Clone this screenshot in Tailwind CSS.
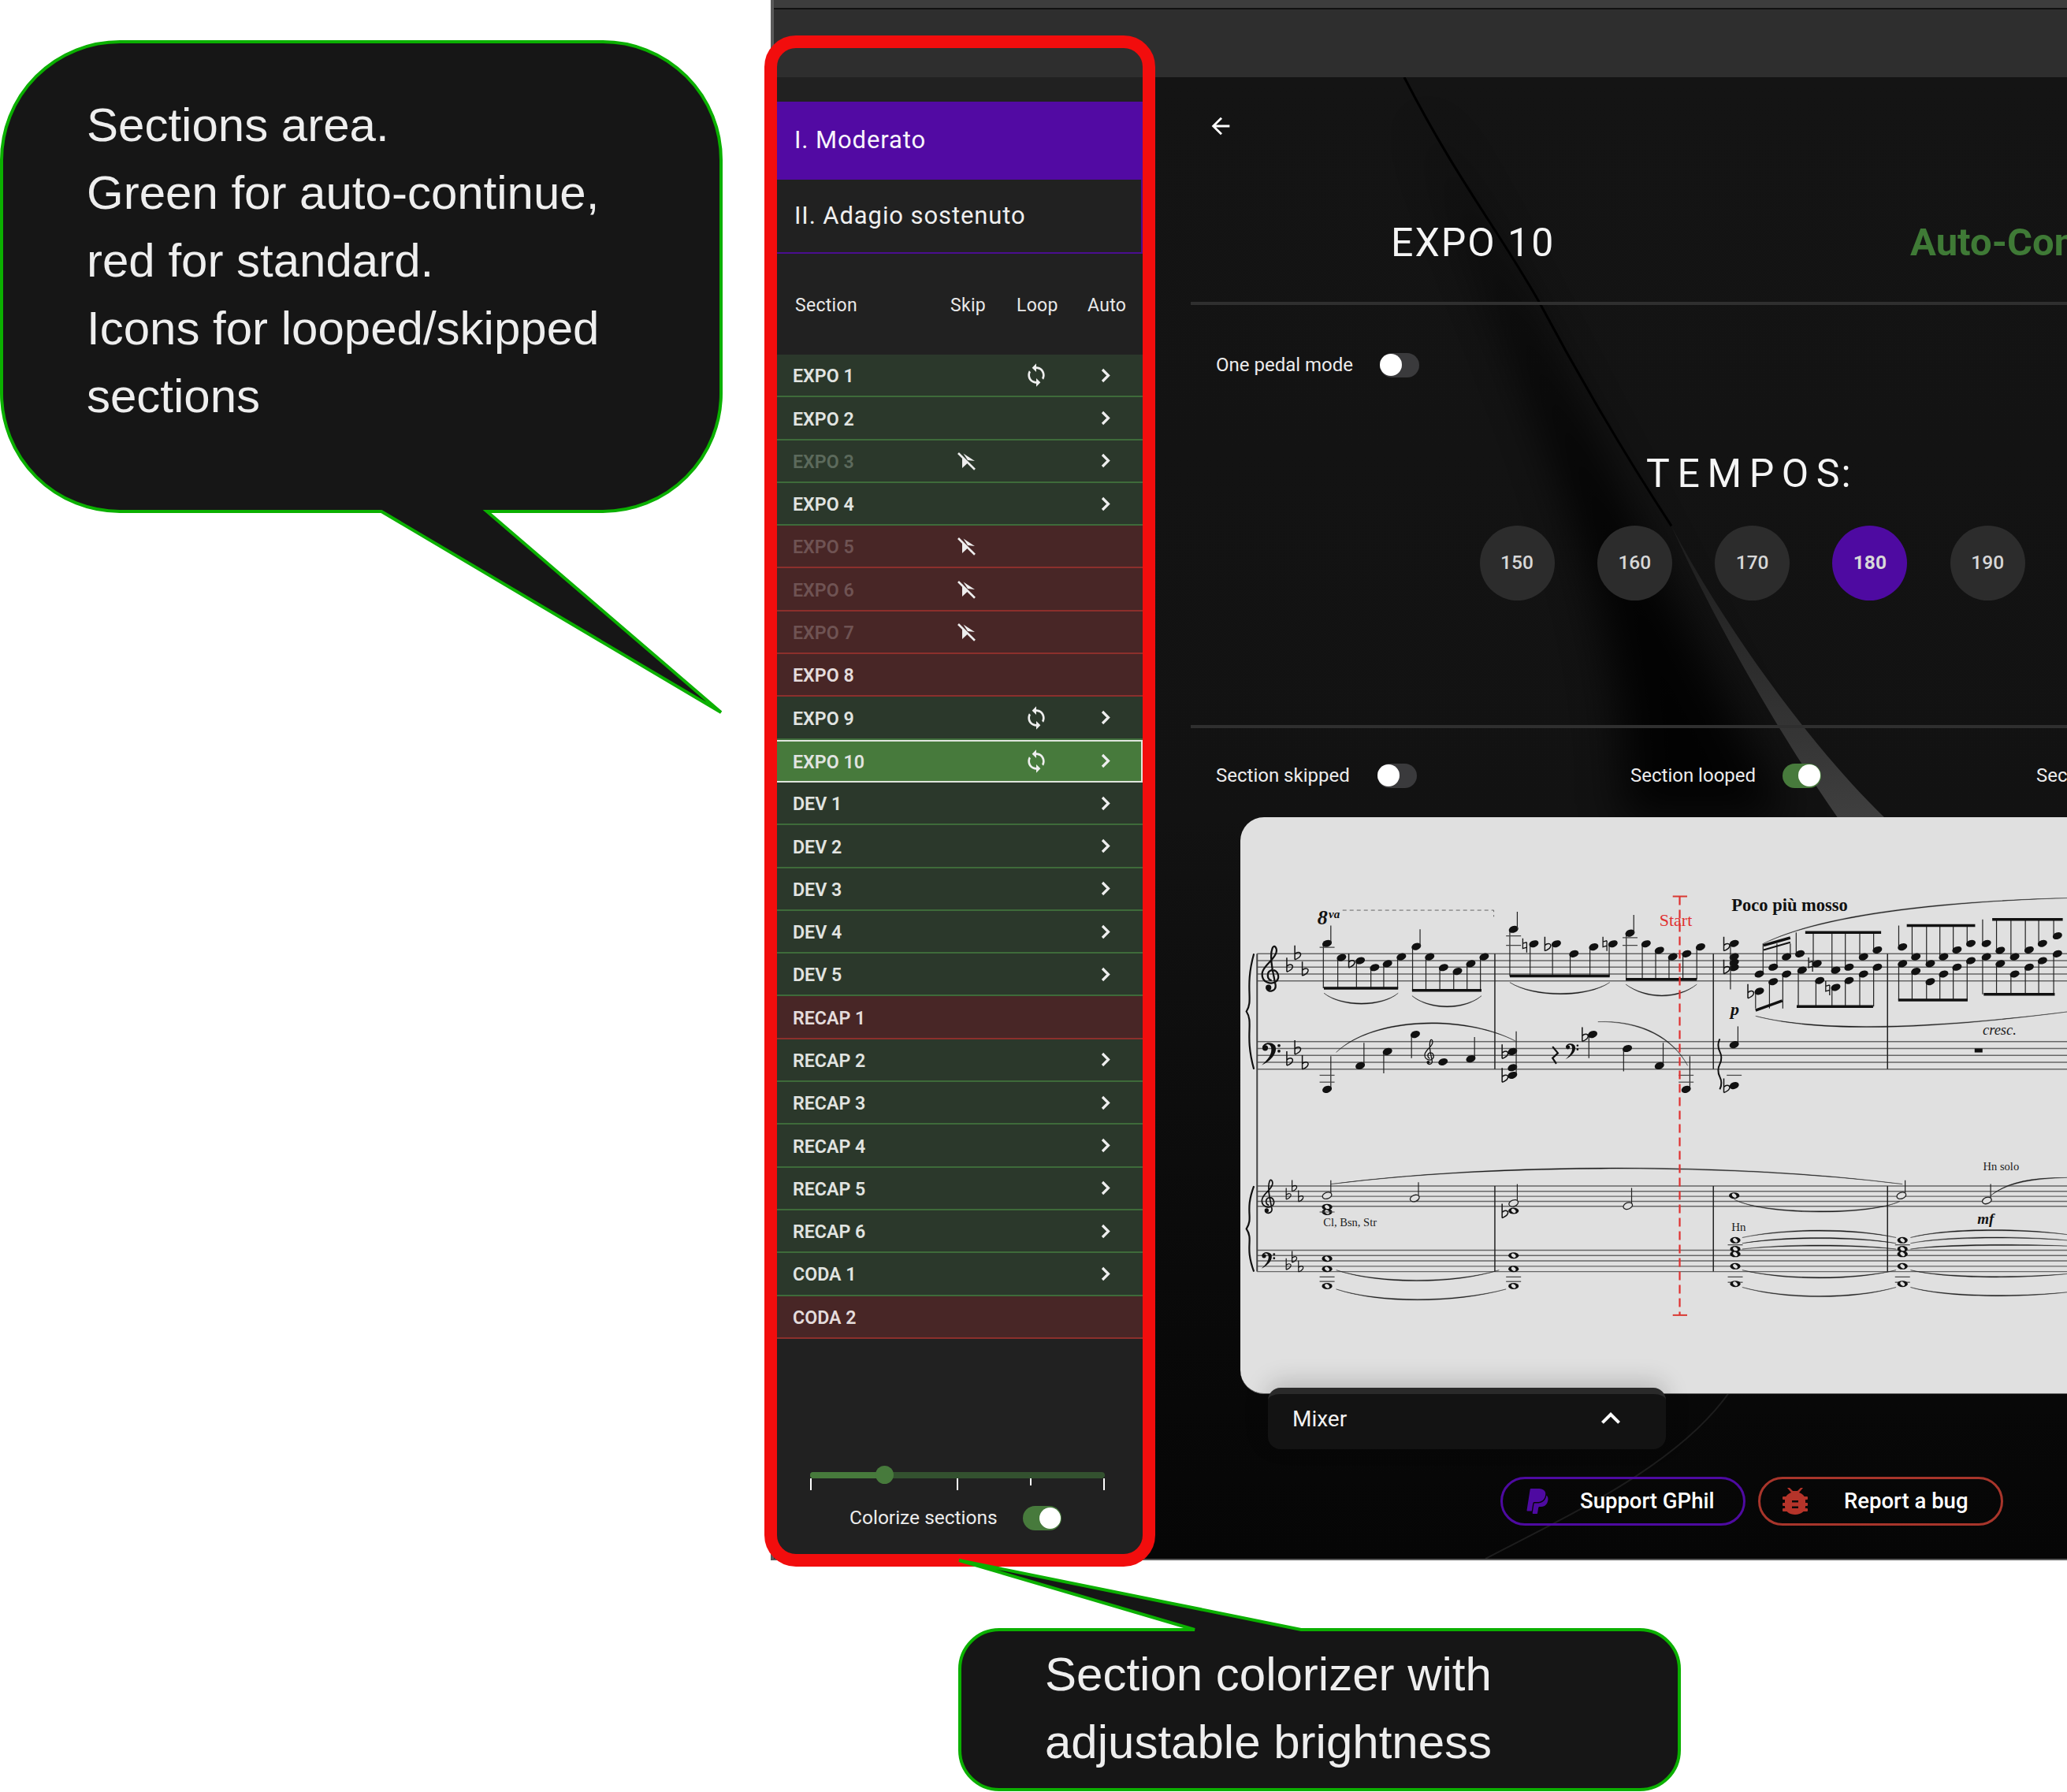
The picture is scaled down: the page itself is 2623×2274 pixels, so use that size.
<!DOCTYPE html>
<html lang="en">
<head>
    <meta charset="UTF-8">
    <title>GPhil sections area</title>
    <script src="https://cdn.jsdelivr.net/npm/@tailwindcss/browser@4"></script>
</head>
<body class="bg-white">
<div class="relative w-[2623px] h-[2274px] overflow-hidden font-[Roboto,sans-serif] bg-white">

    <!-- app window -->
    <div class="ml-[978px] w-[1645px] h-[1980px] flex flex-col border-l-[4px] border-b-[2px] border-[#5a5a5a] overflow-hidden">
        <div class="h-[98px] shrink-0 bg-[#2e2e2e]">
            <div class="h-[12px] bg-[#3d3d3d] border-b-[2px] border-[#111]"></div>
        </div>

        <div class="flex flex-1 min-h-0">
            <!-- sidebar -->
            <aside class="w-[468px] shrink-0 bg-[#212121] pt-[31px] text-white">
                <div class="h-[99px] bg-[#520aa3] flex items-center pl-[26px] text-[31px] tracking-[0.9px] text-[#f8f5fc]">I. Moderato</div>
                <div class="h-[94px] border-b-2 border-r-2 border-[#4a0e8f] flex items-center pl-[26px] text-[31px] tracking-[0.9px] text-[#efefef]">II. Adagio sostenuto</div>
                <div class="h-[128px] flex items-center pt-[4px] pl-[27px] text-[23px] tracking-[0.3px] text-[#e8e8e8]">
                    <span class="w-[197px]">Section</span>
                    <span class="w-[84px]">Skip</span>
                    <span class="w-[90px]">Loop</span>
                    <span>Auto</span>
                </div>
                <div id="rows"></div>

                <div class="relative ml-[46px] mt-[169px] w-[374px] h-[8px] rounded-full bg-[#33512f]">
                    <div class="w-[94px] h-full rounded-l-full bg-[#477a3c]"></div>
                    <div class="absolute left-[83px] top-[-8px] w-[23px] h-[23px] rounded-full bg-[#477a3c]"></div>
                    <div class="absolute left-[0px] top-[8px] w-[2px] h-[15px] bg-white"></div>
                    <div class="absolute left-[186px] top-[8px] w-[2px] h-[15px] bg-white"></div>
                    <div class="absolute left-[279px] top-[8px] w-[2px] h-[9px] bg-white"></div>
                    <div class="absolute left-[372px] top-[8px] w-[2px] h-[15px] bg-white"></div>
                </div>
                <div class="flex items-center ml-[96px] mt-[35px] h-[31px] text-[24.5px] text-[#ececec]">
                    <span class="w-[220px] whitespace-nowrap">Colorize sections</span>
                    <span class="relative block w-[49px] h-[31px] rounded-full bg-[#477a3c]">
                        <span class="absolute right-[1px] top-[2px] w-[27px] h-[27px] rounded-full bg-white"></span>
                    </span>
                </div>
            </aside>

            <!-- main pane -->
            <main class="relative flex-1 min-w-0 overflow-hidden bg-gradient-to-b from-[#141414] via-[#121212] to-[#060606] pl-[61px] text-white">
                <svg class="absolute inset-0 w-full h-full" viewBox="1450 98 1173 1882" preserveAspectRatio="none">
                    <defs>
                        <filter id="soft" x="-40%" y="-20%" width="180%" height="140%"><feGaussianBlur stdDeviation="28"/></filter>
                        <linearGradient id="wedge" x1="0" y1="0" x2="0" y2="1">
                            <stop offset="0" stop-color="#1c1c1c"/>
                            <stop offset="1" stop-color="#3f3f3f"/>
                        </linearGradient>
                    </defs>
                    <path d="M1800 140 C1890 310 2020 560 2270 1040 L2060 1040 C2070 800 1960 520 1800 140 Z" fill="#000" opacity="0.85" filter="url(#soft)"/>
                    <path d="M2121 668 C2180 800 2270 950 2333 1040 L2393 1040 C2300 950 2190 800 2121 668 Z" fill="url(#wedge)"/>
                    <path d="M1782 98 C1850 230 1900 290 1954 385 C2010 490 2070 590 2121 668" fill="none" stroke="#000" stroke-width="3"/>
                    <path d="M2194 1769 C2130 1860 2000 1920 1885 1980" fill="none" stroke="#1d1d1d" stroke-width="2"/>
                </svg>

                <div class="relative">
                    <div class="h-[129px] pt-[45px] pl-[21px]">
                        <svg class="w-[34px] h-[34px]" viewBox="0 0 24 24" fill="#fff"><path d="M20 11H7.83l5.59-5.59L12 4l-8 8 8 8 1.41-1.41L7.83 13H20v-2z"/></svg>
                    </div>
                    <div class="h-[156px] pt-[6px] flex items-center text-[50px] whitespace-nowrap">
                        <span class="ml-[254px] w-[659px] shrink-0 tracking-[2px] text-[#f5f5f5]">EXPO 10</span>
                        <span class="font-bold text-[#3f7a36] text-[49px]">Auto-Continue</span>
                    </div>
                    <div class="h-[4px] bg-[#2f2f2f]"></div>

                    <div class="h-[152px] flex items-center pl-[32px] text-[24px]">
                        <span class="w-[208px] whitespace-nowrap text-[#ececec]">One pedal mode</span>
                        <span class="relative block w-[50px] h-[31px] rounded-full bg-[#3a3a3c]">
                            <span class="absolute left-0 top-[1px] w-[28px] h-[28px] rounded-full bg-white"></span>
                        </span>
                    </div>

                    <div class="h-[122px] pt-[2px] flex items-center pl-[578px] text-[50px] text-[#f5f5f5] whitespace-nowrap tracking-[9.6px]">
                        <div>TEMPO<span class="tracking-[2px]">S:</span></div>
                    </div>

                    <div class="mt-[6px] ml-[366.5px] flex gap-[54.3px] text-[24.5px] font-medium text-[#d8d8d8]">
                        <div class="w-[95px] h-[95px] shrink-0 rounded-full bg-[#2c2c2c] flex items-center justify-center">150</div>
                        <div class="w-[95px] h-[95px] shrink-0 rounded-full bg-[#2c2c2c] flex items-center justify-center">160</div>
                        <div class="w-[95px] h-[95px] shrink-0 rounded-full bg-[#2c2c2c] flex items-center justify-center">170</div>
                        <div class="w-[95px] h-[95px] shrink-0 rounded-full bg-[#4e0aa1] flex items-center justify-center font-bold">180</div>
                        <div class="w-[95px] h-[95px] shrink-0 rounded-full bg-[#2c2c2c] flex items-center justify-center">190</div>
                    </div>

                    <div class="mt-[158px] h-[4px] bg-[#2f2f2f]"></div>

                    <div class="h-[113px] pt-[44px] pl-[32px] flex items-start text-[24px] leading-[32px] whitespace-nowrap text-[#ececec]">
                        <div class="w-[526px] shrink-0 flex items-center">
                            <span class="w-[205px]">Section skipped</span>
                            <span class="relative block w-[50px] h-[31px] rounded-full bg-[#3a3a3c]">
                                <span class="absolute left-0 top-[1px] w-[28px] h-[28px] rounded-full bg-white"></span>
                            </span>
                        </div>
                        <div class="w-[515px] shrink-0 flex items-center">
                            <span class="w-[193px]">Section looped</span>
                            <span class="relative block w-[49px] h-[31px] rounded-full bg-[#477a3c]">
                                <span class="absolute right-[1px] top-[1px] w-[28px] h-[28px] rounded-full bg-white"></span>
                            </span>
                        </div>
                        <div>Section auto-continue</div>
                    </div>

                    <!-- score -->
                    <div class="relative ml-[63px] w-[1049px] h-[732px] rounded-l-[30px] bg-[#e0e0e0] border-b-[1px] border-[#666] overflow-hidden">
                        <svg id="score" class="absolute inset-0" width="1049" height="732" viewBox="0 0 1049 732"></svg>
                    </div>

                    <!-- mixer bar -->
                    <div class="relative ml-[98px] mt-[-8px] w-[505px] h-[78px] rounded-[16px] bg-[#131313] border-t-[8px] border-[#2a2a2a] flex items-center justify-between pl-[31px] pr-[46px] text-[28px] shadow-[0_-8px_30px_rgba(0,0,0,0.18)]">
                        <span class="pb-[7px] text-[#f2f2f2]">Mixer</span>
                        <svg class="w-[48px] h-[48px] mb-[8px]" viewBox="0 0 24 24" fill="#fff"><path d="M12 8l-6 6 1.41 1.41L12 10.83l4.59 4.58L18 14z"/></svg>
                    </div>

                    <!-- buttons -->
                    <div class="mt-[35px] ml-[393px] flex gap-[16px] text-[27.5px] font-medium text-white whitespace-nowrap">
                        <div class="w-[311px] h-[62px] rounded-full border-[3px] border-[#4e0aa1] flex items-center pl-[29px]">
                            <svg class="w-[30px] h-[36px]" viewBox="0 0 384 512" fill="#4e0aa1"><path d="M111.4 295.9c-3.5 19.2-17.4 108.7-21.5 134-.3 1.8-1 2.5-3 2.5H12.3c-7.6 0-13.1-6.6-12.1-13.9L58.8 46.6c1.5-9.6 10.1-16.9 20-16.9 152.3 0 165.1-3.7 204 11.4 60.1 23.3 65.6 79.5 44 140.3-21.5 62.6-72.5 89.5-140.1 90.3-43.4.7-69.5-7-75.3 24.2zM357.1 152c-1.8-1.3-2.5-1.8-3 1.3-2 11.4-5.1 22.5-8.8 33.6-39.9 113.8-150.5 103.9-204.5 103.9-6.1 0-10.1 3.3-10.9 9.4-22.6 140.4-27.1 169.7-27.1 169.7-1 7.1 3.5 12.9 10.6 12.9h63.5c8.6 0 15.7-6.3 17.4-14.9.7-5.4-1.1 6.1 14.4-91.3 4.6-22 14.3-19.7 29.3-19.7 71 0 126.4-28.8 142.9-112.3 6.5-34.8 4.6-71.4-23.8-92.6z"/></svg>
                            <span class="ml-[39px]">Support GPhil</span>
                        </div>
                        <div class="w-[311px] h-[62px] rounded-full border-[3px] border-[#a8352b] flex items-center pl-[28px]">
                            <svg class="w-[32px] h-[35px]" viewBox="0 0 32 35" fill="#b5342a">
                                <path d="M6 1l2-1 5 5h6l5-5 2 1-5 6c5 2 8 5 8 10v8c0 6-6 10-13 10S3 31 3 25v-8c0-5 3-8 8-10z" transform="translate(0 -1)"/>
                                <rect x="0" y="11" width="32" height="4" rx="1"/><rect x="0" y="19" width="32" height="4" rx="1"/><rect x="0" y="26" width="32" height="4" rx="1"/>
                                <rect x="12" y="16" width="8" height="2.5" fill="#0a0a0a"/><rect x="12" y="23.5" width="8" height="2.5" fill="#0a0a0a"/>
                            </svg>
                            <span class="ml-[46px]">Report a bug</span>
                        </div>
                    </div>
                </div>
            </main>
        </div>
    </div>

    <!-- red highlight round the sections area -->
    <div class="absolute left-[970px] top-[45px] w-[496px] h-[1943px] rounded-[40px] border-[16px] border-[#f20d0d] pointer-events-none"></div>

    <!-- callouts -->
    <svg class="absolute inset-0 pointer-events-none" width="2623" height="2274" viewBox="0 0 2623 2274">
        <path d="M152 53H765A150 150 0 0 1 915 203V499A150 150 0 0 1 765 649H618L915 904L484 649H152A150 150 0 0 1 2 499V203A150 150 0 0 1 152 53Z" fill="#161616" stroke="#0bb000" stroke-width="4"/>
        <path d="M1268 2068H1516L1217 1980L1651 2068H2081A50 50 0 0 1 2131 2118V2221A50 50 0 0 1 2081 2271H1268A50 50 0 0 1 1218 2221V2118A50 50 0 0 1 1268 2068Z" fill="#161616" stroke="#0bb000" stroke-width="4"/>
    </svg>
    <div class="absolute left-[110px] top-[116px] font-['Liberation_Sans',sans-serif] text-[60px] leading-[86px] text-[#eeeeee] whitespace-nowrap">
        Sections area.<br>Green for auto-continue,<br>red for standard.<br>Icons for looped/skipped<br>sections
    </div>
    <div class="absolute left-[1326px] top-[2082px] font-['Liberation_Sans',sans-serif] text-[60px] leading-[86px] text-[#eeeeee] whitespace-nowrap">
        Section colorizer with<br>adjustable brightness
    </div>
</div>

<script>
    // Section rows
    const sections = [
        ['EXPO 1','g','loop'],['EXPO 2','g'],['EXPO 3','g','skip'],['EXPO 4','g'],
        ['EXPO 5','r','skip'],['EXPO 6','r','skip'],['EXPO 7','r','skip'],['EXPO 8','r'],
        ['EXPO 9','g','loop'],['EXPO 10','s','loop'],
        ['DEV 1','g'],['DEV 2','g'],['DEV 3','g'],['DEV 4','g'],['DEV 5','g'],
        ['RECAP 1','r'],['RECAP 2','g'],['RECAP 3','g'],['RECAP 4','g'],['RECAP 5','g'],['RECAP 6','g'],
        ['CODA 1','g'],['CODA 2','r']
    ];
    const rowClass = {
        g: 'bg-[#2b382b] border-[#3e6b3a]',
        r: 'bg-[#482626] border-[#8c2f2c]',
        s: 'bg-[#477a3c] border-[#dfe6dd] border-t-[2px] border-r-[2px]'
    };
    const syncIcon = '<svg class="w-[32px] h-[32px]" viewBox="0 0 24 24" fill="#eee"><path d="M12 4V1L8 5l4 4V6c3.31 0 6 2.69 6 6 0 1.01-.25 1.97-.7 2.8l1.46 1.46C19.54 15.03 20 13.57 20 12c0-4.42-3.58-8-8-8zm0 14c-3.31 0-6-2.69-6-6 0-1.01.25-1.97.7-2.8L5.24 7.74C4.46 8.97 4 10.43 4 12c0 4.42 3.58 8 8 8v3l4-4-4-4v3z"/></svg>';
    const skipIcon = '<svg class="w-[24px] h-[24px]" viewBox="0 0 24 24" fill="#eee"><path d="M7 5.5V21l7-6.5z"/><path d="M8.5 2.5L23 12l-9-1z"/><path d="M2 2l21 20.7" stroke="#eee" stroke-width="2.6" fill="none"/></svg>';
    const chevron = '<svg class="w-[12px] h-[19px]" viewBox="0 0 12 19" fill="none" stroke="#eee" stroke-width="3.2"><path d="M2 2l7.5 7.5L2 17"/></svg>';

    document.getElementById('rows').innerHTML = sections.map(([name, kind, icon]) => {
        const skipped = icon === 'skip';
        const text = skipped ? (kind === 'r' ? 'text-[#6f5353]' : 'text-[#5c6a5c]') : (kind === 'r' ? 'text-[#e4dcdc]' : 'text-[#e1e4e1]');
        return `<div class="grid grid-cols-[206px_76px_102px_74px] items-center h-[54.3px] border-b-[2px] ${rowClass[kind]}">
            <span class="pl-[24px] pt-[3px] text-[23.2px] font-semibold ${text}">${name}</span>
            <span class="flex justify-center">${skipped ? skipIcon : ''}</span>
            <span class="flex justify-center">${icon === 'loop' ? syncIcon : ''}</span>
            <span class="flex justify-center">${kind !== 'r' ? chevron : ''}</span>
        </div>`;
    }).join('');

    // Score: points are read off the crop of the reference, X() and Y() bring them to the sheet
    const X = x => x / 1.475 - 14;
    const Y = y => y / 2.063 - 7;
    let s = '';
    const line = (x1, y1, x2, y2, w = 1, c = '#333') => { s += `<line x1="${X(x1)}" y1="${Y(y1)}" x2="${X(x2)}" y2="${Y(y2)}" stroke="${c}" stroke-width="${w}"/>`; };
    const staff = (ys) => ys.forEach(y => line(52, y, 1568, y, 1.4, '#666'));
    const head = (x, y) => {
        s += `<ellipse cx="${X(x)}" cy="${Y(y)}" rx="6.2" ry="4.3" transform="rotate(-20 ${X(x)} ${Y(y)})" fill="#111"/>`;
    };
    const halfHead = (x, y) => {
        s += `<ellipse cx="${X(x)}" cy="${Y(y)}" rx="6" ry="4" transform="rotate(-20 ${X(x)} ${Y(y)})" fill="#e0e0e0" stroke="#222" stroke-width="1.3"/>`;
    };
    const wholeHead = (x, y) => {
        s += `<ellipse cx="${X(x)}" cy="${Y(y)}" rx="6.6" ry="4" fill="#111"/><ellipse cx="${X(x)}" cy="${Y(y)}" rx="2.2" ry="3.2" transform="rotate(-50 ${X(x)} ${Y(y)})" fill="#e0e0e0"/>`;
    };
    const stem = (x, y1, y2) => line(x, y1, x, y2, 1.2, '#222');
    const beam = (x1, y1, x2, y2, w = 3.5) => line(x1, y1, x2, y2, w, '#111');
    const ledger = (x, y) => line(x - 14, y, x + 14, y, 1.2, '#444');
    const slur = (x1, y1, a, b, c, d, x2, y2) => {
        s += `<path d="M${X(x1)} ${Y(y1)}C${X(a)} ${Y(b)} ${X(c)} ${Y(d)} ${X(x2)} ${Y(y2)}C${X(c)} ${Y(d) + 1.6} ${X(a)} ${Y(b) + 1.6} ${X(x1)} ${Y(y1)}Z" fill="#1c1c1c" stroke="#1c1c1c" stroke-width="0.4"/>`;
    };
    const flat = (x, y, k = 1) => { s += `<path transform="translate(${X(x)} ${Y(y)}) scale(${k})" d="M-3 -12V6M-3 -1C1 -5 6 -3 4 1C3 3 0 5 -3 6" fill="none" stroke="#111" stroke-width="1.5"/>`; };
    const natural = (x, y) => { s += `<path transform="translate(${X(x)} ${Y(y)})" d="M-2.5 -9V4L2.5 2.5M-2.5 -2.5L2.5 -4M2.5 -4V9" fill="none" stroke="#111" stroke-width="1.3"/>`; };
    const treble = (x, y, k = 1) => { s += `<g transform="translate(${X(x)} ${Y(y)}) scale(${k})"><path d="M13 44C7 43 6 33 13 31C21 30 24 40 19 45C13 50 0 47 1 35C2 25 17 18 19 8C20 2 16 -2 14 3C12 8 12 18 14 30L18 50C19 58 8 60 7 54" fill="none" stroke="#111" stroke-width="2.3"/><circle cx="9" cy="53" r="3.6" fill="#111"/></g>`; };
    const bass = (x, y, k = 1) => { s += `<g transform="translate(${X(x)} ${Y(y)}) scale(${k})"><path d="M2 8C2 1 13 -1 18 5C22 13 14 24 1 30C9 23 15 15 13 7C11 2 6 3 5 6Z" fill="#111"/><circle cx="5.5" cy="8" r="3.6" fill="#111"/><circle cx="23" cy="5" r="1.9" fill="#111"/><circle cx="23" cy="12" r="1.9" fill="#111"/></g>`; };
    const text = (x, y, str, size, font, extra = '') => { s += `<text x="${X(x)}" y="${Y(y)}" font-family="${font}" font-size="${size}" ${extra}>${str}</text>`; };
    // notes hanging from or standing under one beam
    const group = (notes, beamY, x1, x2) => {
        notes.forEach(([x, y]) => { stem(x - 7, y, beamY); head(x, y); });
        beam(x1, beamY, x2, beamY);
    };

    staff([372, 390, 407, 425, 443]);
    staff([602, 620, 638, 656, 674]);
    staff([980, 994, 1007, 1020, 1033]);
    staff([1148, 1162, 1176, 1190, 1204]);

    // system lines and braces
    line(52, 372, 52, 1204, 2, '#444');
    [497, 906, 1232].forEach(x => { line(x, 372, x, 674, 1.5, '#222'); line(x, 980, x, 1204, 1.5, '#222'); });
    const brace = (y1, y2) => {
        const m = (y1 + y2) / 2;
        s += `<path d="M${X(46)} ${Y(y1)}C${X(28)} ${Y(y1 + (m - y1) * .6)} ${X(46)} ${Y(m - 30)} ${X(32)} ${Y(m)}C${X(46)} ${Y(m + 30)} ${X(28)} ${Y(y2 - (y2 - m) * .6)} ${X(46)} ${Y(y2)}" fill="none" stroke="#111" stroke-width="2.2"/>`;
    };
    brace(372, 674); brace(980, 1204);
    treble(60, 351); treble(60, 963, 0.74);
    bass(59, 602); bass(59, 1151, 0.73);
    [[112, 407], [127, 375], [141, 417]].forEach(p => flat(...p));
    [[112, 652], [127, 623], [141, 662]].forEach(p => flat(...p));
    [[110, 1005, .8], [121, 984, .8], [133, 1011, .8]].forEach(p => flat(...p));
    [[110, 1189, .8], [121, 1170, .8], [133, 1195, .8]].forEach(p => flat(...p));

    // top staff, measure 1
    group([[183, 345], [210, 382], [245, 390], [272, 408], [296, 398], [322, 380]], 462, 177, 316);
    stem(190, 345, 298); ledger(183, 355); flat(228, 396);
    group([[350, 353], [375, 380], [401, 408], [427, 418], [452, 398], [477, 380]], 468, 342, 472);
    stem(357, 353, 308);
    slur(177, 475, 210, 510, 285, 510, 316, 475);
    slur(342, 482, 375, 518, 440, 518, 472, 482);
    // measure 2
    group([[532, 308], [570, 346], [612, 346], [645, 372], [682, 354], [718, 346]], 430, 525, 712);
    stem(539, 308, 262); ledger(532, 325); ledger(532, 350); natural(553, 350); flat(595, 352); natural(703, 346);
    slur(525, 447, 570, 485, 670, 485, 712, 447);
    group([[750, 318], [780, 346], [805, 363], [830, 380], [856, 372], [882, 354]], 439, 742, 875);
    stem(757, 318, 270); ledger(750, 330); ledger(750, 350);
    slur(742, 452, 780, 490, 840, 490, 875, 452);
    // measure 3
    head(945, 345); head(945, 380); head(945, 395); head(945, 408);
    stem(938, 345, 465); flat(930, 352); flat(930, 412);
    text(938, 532, 'p', 22, 'Liberation Serif', 'font-style="italic" font-weight="bold" fill="#111"');
    [[992, 425], [1018, 407], [1043, 380]].forEach(([x, y]) => { stem(x + 7, y, 345); head(x, y); });
    beam(1000, 350, 1050, 330); beam(1000, 362, 1050, 342, 2);
    [[992, 470], [1018, 445], [1043, 425]].forEach(([x, y]) => { stem(x - 7, y, 515); head(x, y); });
    beam(985, 520, 1035, 495); flat(975, 476);
    group([[1068, 372], [1100, 398], [1135, 415], [1160, 407], [1187, 380], [1213, 362]], 316, 1078, 1220);
    group([[1072, 415], [1105, 442], [1135, 460], [1160, 442], [1187, 425], [1213, 407]], 510, 1062, 1205);
    natural(1088, 400); natural(1120, 462);
    // measure 4
    group([[1260, 354], [1285, 380], [1312, 398], [1337, 380], [1362, 362], [1388, 345]], 298, 1268, 1396);
    group([[1260, 398], [1285, 418], [1312, 445], [1337, 425], [1362, 407], [1388, 390]], 493, 1252, 1382);
    group([[1417, 345], [1443, 363], [1470, 380], [1497, 362], [1522, 345], [1550, 325]], 282, 1428, 1560);
    group([[1417, 380], [1443, 398], [1470, 425], [1497, 407], [1522, 390], [1550, 372]], 478, 1412, 1545);
    slur(1000, 345, 1100, 275, 1300, 235, 1568, 226);
    slur(985, 535, 1100, 575, 1300, 570, 1568, 524);

    // 8va and tempo text
    text(165, 294, '8', 26, 'Liberation Serif', 'font-style="italic" font-weight="bold" fill="#111"');
    text(186, 278, 'va', 15, 'Liberation Serif', 'font-style="italic" font-weight="bold" fill="#111"');
    s += `<path d="M${X(212)} ${Y(258)}H${X(495)}V${Y(275)}" fill="none" stroke="#666" stroke-dasharray="5 4"/>`;
    text(940, 260, 'Poco più mosso', 22.5, 'Liberation Serif', 'font-weight="bold" fill="#111"');
    text(1410, 584, 'cresc.', 18.5, 'Liberation Serif', 'font-style="italic" fill="#222"');
    text(1411, 938, 'Hn solo', 14.5, 'Liberation Serif', 'fill="#222"');
    text(176, 1086, 'Cl, Bsn, Str', 14.5, 'Liberation Serif', 'fill="#222"');
    text(940, 1097, 'Hn', 15, 'Liberation Serif', 'fill="#222"');
    text(1400, 1079, 'mf', 19, 'Liberation Serif', 'font-style="italic" font-weight="bold" fill="#111"');

    // bass staff of the piano
    const up = (x, y, top) => { stem(x + 7, y, top); head(x, y); };
    const down = (x, y, low) => { stem(x - 7, y, low); head(x, y); };
    const halfUp = (x, y, top) => { stem(x + 7, y, top); halfHead(x, y); };
    up(183, 727, 640); ledger(183, 690); ledger(183, 708);
    up(245, 665, 605); down(296, 628, 685); down(348, 583, 645);
    treble(365, 596, 0.55);
    head(400, 655); up(452, 647, 590);
    head(530, 628); head(530, 670); up(530, 690, 575); flat(515, 634); flat(515, 696);
    s += `<path d="M${X(605)} ${Y(615)}L${X(615)} ${Y(632)}L${X(605)} ${Y(645)}L${X(612)} ${Y(660)}" fill="none" stroke="#111" stroke-width="2.2"/>`;
    bass(628, 605, 0.7);
    down(680, 583, 645); flat(665, 589);
    down(745, 620, 680); up(805, 665, 605);
    up(855, 727, 640); ledger(855, 690); ledger(855, 708);
    up(945, 610, 562); head(945, 717); flat(930, 723); ledger(945, 690);
    s += `<path d="M${X(918)} ${Y(595)}q-4 8 0 16t0 16t0 16t0 16" fill="none" stroke="#111" stroke-width="2"/>`;
    slur(200, 630, 270, 535, 440, 530, 535, 600);
    slur(690, 550, 770, 545, 830, 590, 858, 665);
    s += `<rect x="${X(1395)}" y="${Y(620)}" width="10" height="5" fill="#111"/>`;

    // orchestral reduction
    halfUp(183, 1005, 965); wholeHead(183, 1035); wholeHead(183, 1048); ledger(183, 1048);
    halfUp(347, 1012, 970); halfUp(532, 1025, 975); wholeHead(532, 1045); flat(515, 1051);
    halfUp(746, 1032, 985); wholeHead(945, 1005); halfUp(1258, 1005, 965); halfUp(1418, 1018, 975);
    slur(190, 975, 500, 918, 950, 918, 1260, 975);
    slur(945, 1015, 1000, 1055, 1200, 1055, 1255, 1020);
    slur(1425, 1005, 1460, 965, 1510, 958, 1568, 958);

    [[183, 1170], [183, 1197], [183, 1242], [532, 1162], [532, 1197], [532, 1242]].forEach(([x, y]) => wholeHead(x, y));
    [[183, 1218], [183, 1230], [532, 1218], [532, 1230], [947, 1218], [947, 1232], [1260, 1218], [1260, 1232], [947, 1134], [1260, 1134]].forEach(p => ledger(...p));
    [947, 1260].forEach(x => [1122, 1145, 1158, 1190, 1236].forEach(y => wholeHead(x, y)));
    slur(200, 1200, 280, 1235, 420, 1235, 505, 1200);
    slur(200, 1250, 280, 1285, 420, 1285, 518, 1250);
    [1115, 1130, 1145].forEach((y, i) => {
        slur(960, y, 1040, y - 26 + i * 6, 1170, y - 26 + i * 6, 1248, y);
        slur(1275, y, 1340, y - 26 + i * 6, 1480, y - 26 + i * 6, 1568, y - 8);
    });
    slur(960, 1200, 1040, 1225, 1170, 1225, 1248, 1200);
    slur(960, 1245, 1040, 1275, 1170, 1275, 1248, 1245);
    slur(1275, 1200, 1340, 1220, 1480, 1220, 1568, 1210);
    slur(1275, 1245, 1340, 1270, 1480, 1270, 1568, 1258);

    // red start marker
    line(843, 222, 843, 1318, 2.2, '#e03131');
    line(830, 222, 857, 222, 2, '#d93a33');
    line(830, 1318, 857, 1318, 2, '#d93a33');
    text(805, 300, 'Start', 22, 'Liberation Serif', 'fill="#e03131"');
    s = s.replace(/stroke="#e03131" stroke-width="2.2"/, 'stroke="#e03131" stroke-width="2.2" stroke-dasharray="11 6"');

    document.getElementById('score').innerHTML = s;
</script>
</body>
</html>
